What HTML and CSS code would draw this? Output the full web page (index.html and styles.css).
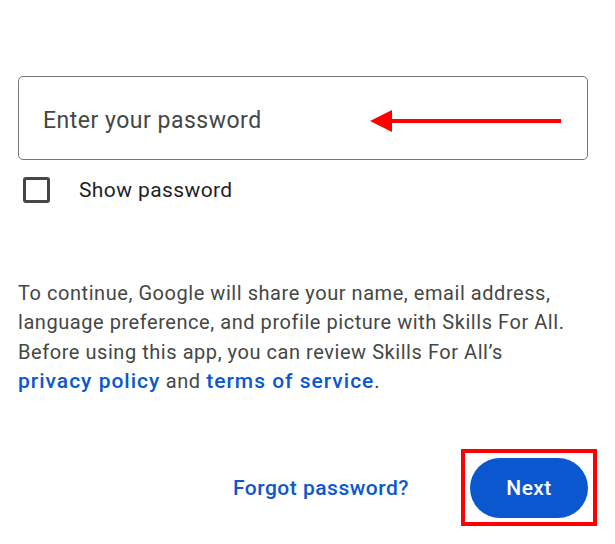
FILE: index.html
```html
<!DOCTYPE html>
<html lang="en">
<head>
<meta charset="utf-8">
<title>Enter your password</title>
<link rel="stylesheet" href="styles.css">
</head>
<body>
<main class="page">
  <div class="field">
    <span class="placeholder">Enter your password</span>
    <svg class="arrow" width="192" height="24" viewBox="0 0 192 24" aria-hidden="true">
      <polygon points="0,12 22,1 22,23" fill="#ff0000"/>
      <rect x="20" y="10" width="171" height="4" fill="#ff0000"/>
    </svg>
  </div>
  <label class="show">
    <span class="box"></span>
    <span class="show-text">Show password</span>
  </label>
  <p class="notice">To continue, Google will share your name, email address, language preference, and profile picture with Skills For All. Before using this app, you can review Skills For All’s <a class="link" href="#">privacy policy</a> and <a class="link" href="#">terms of service</a>.</p>
  <div class="actions">
    <a class="forgot" href="#">Forgot password?</a>
    <div class="next-wrap">
      <button class="next" type="button">Next</button>
      <span class="highlight"></span>
    </div>
  </div>
</main>
</body>
</html>
```
FILE: styles.css
```css
html, body {
  margin: 0;
  padding: 0;
  background: #ffffff;
}
body {
  font-family: Roboto, "Liberation Sans", Arial, sans-serif;
  color: #1f1f1f;
  min-height: 544px;
}
.page {
  padding: 76px 27px 25px 18px;
}
.field {
  position: relative;
  box-sizing: border-box;
  height: 84px;
  border: 1px solid #747775;
  border-radius: 5px;
  padding-left: 24px;
  display: flex;
  align-items: center;
}
.placeholder {
  font-size: 23px;
  letter-spacing: 0.5px;
  color: #444746;
  padding-top: 4px;
}
.arrow {
  position: absolute;
  left: 351px;
  top: 32px;
}
.show {
  display: flex;
  align-items: center;
  margin-top: 17px;
  height: 26px;
}
.box {
  box-sizing: border-box;
  width: 27px;
  height: 26px;
  margin-left: 5px;
  border: 3px solid #444746;
  border-radius: 3px;
}
.show-text {
  margin-left: 29px;
  font-size: 21px;
  letter-spacing: 0.4px;
  color: #1f1f1f;
}
.notice {
  margin: 76px 16px 0 0;
  font-size: 20px;
  letter-spacing: 0.55px;
  line-height: 29.3px;
  color: #444746;
}
.link {
  color: #0b57d0;
  font-size: 21px;
  font-weight: 500;
  letter-spacing: 1px;
  text-decoration: none;
}
.actions {
  display: flex;
  justify-content: flex-end;
  align-items: center;
  margin-top: 62px;
}
.forgot {
  font-size: 21px;
  font-weight: 500;
  letter-spacing: 0.5px;
  color: #0b57d0;
  text-decoration: none;
  margin-right: 61px;
}
.next-wrap {
  position: relative;
}
.next {
  display: block;
  width: 118px;
  height: 60px;
  border: none;
  border-radius: 30px;
  background: #0b57d0;
  color: #ffffff;
  font-family: Roboto, "Liberation Sans", Arial, sans-serif;
  font-size: 21px;
  font-weight: 500;
  letter-spacing: 0.4px;
  padding: 0;
}
.highlight {
  position: absolute;
  left: -9px;
  top: -9px;
  right: -9px;
  bottom: -8px;
  border: 4px solid #ff0000;
  pointer-events: none;
}
```
